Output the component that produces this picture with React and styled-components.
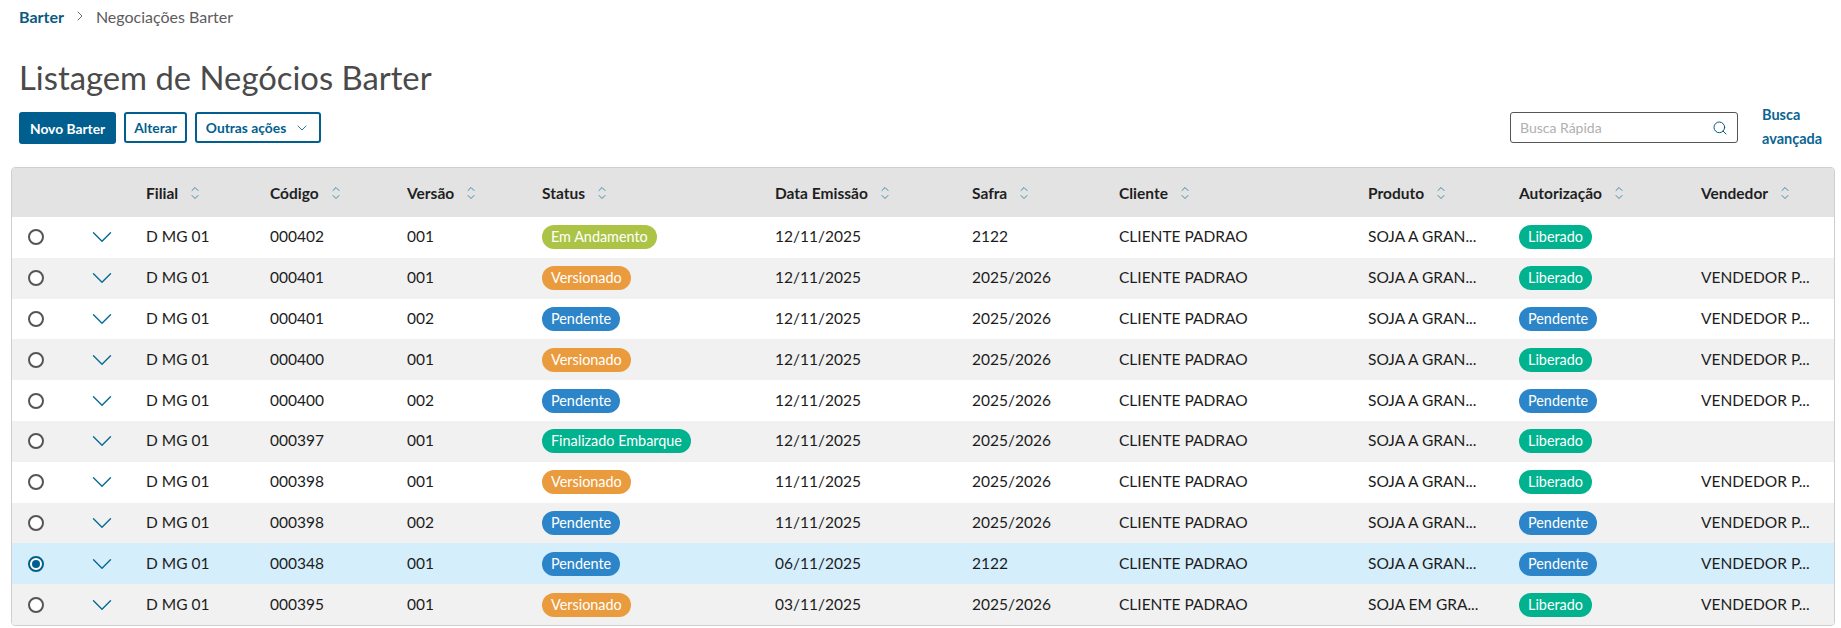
import React from 'react';
import styled, { createGlobalStyle } from 'styled-components';
import { ChevronDown, ChevronRight, ChevronUp, Search } from 'lucide-react';

const GlobalStyle = createGlobalStyle`
  html, body {
    margin: 0;
    padding: 0;
    background: #fff;
    font-family: "Lato", "Open Sans", sans-serif;
    color: #1c1c1c;
    overflow: hidden;
  }
`;

const COLUMNS = '68px 66px 124px 137px 135px 233px 197px 147px 249px 151px 182px 1fr';
const BLUE = '#0c6c94';

const Page = styled.div`
  width: 1841px;
  height: 628px;
  display: flex;
  flex-direction: column;
`;

const Breadcrumb = styled.nav`
  display: flex;
  align-items: center;
  gap: 8px;
  height: 32px;
  padding-left: 19px;
  font-size: 16px;
  color: #555;
`;

const Crumb = styled.span`
  font-weight: ${(p) => (p.$active ? 700 : 400)};
  color: ${(p) => (p.$active ? '#0b5a80' : '#5c5c5c')};
`;

const Title = styled.h1`
  margin: 27px 0 0 19px;
  height: 38px;
  font-size: 32.8px;
  line-height: 38px;
  font-weight: 400;
  color: #4a4a4a;
`;

const Toolbar = styled.div`
  display: flex;
  align-items: flex-start;
  margin-top: 15px;
  padding-left: 19px;
  height: 55px;
`;

const Actions = styled.div`
  display: flex;
  gap: 8px;
`;

const Button = styled.button`
  height: ${(p) => (p.$primary ? 32 : 31)}px;
  padding: 0 ${(p) => (p.$menu ? 9 : p.$primary ? 9 : 8)}px;
  display: flex;
  align-items: center;
  gap: 8px;
  border: 2px solid #005f8f;
  border-radius: 3px;
  background: ${(p) => (p.$primary ? '#005f8f' : '#fff')};
  color: ${(p) => (p.$primary ? '#fff' : '#005f8f')};
  font-family: inherit;
  font-size: 13.8px;
  font-weight: 700;
`;

const SearchArea = styled.div`
  margin-left: auto;
  display: flex;
  gap: 24px;
  padding-right: 9px;
`;

const SearchBox = styled.div`
  width: 228px;
  height: 31px;
  display: flex;
  align-items: center;
  justify-content: space-between;
  padding: 0 9px;
  box-sizing: border-box;
  border: 1px solid #555;
  border-radius: 3px;
  font-size: 14px;
  color: #b0b0b0;
`;

const AdvancedLink = styled.a`
  width: 70px;
  font-size: 14.5px;
  font-weight: 700;
  line-height: 24px;
  margin-top: -9px;
  color: #0b6593;
`;

const Table = styled.div`
  margin: 0 6px 0 11px;
  border: 1px solid #cfcfcf;
  border-radius: 4px;
  overflow: hidden;
`;

const HeadRow = styled.div`
  display: grid;
  grid-template-columns: ${COLUMNS};
  align-items: center;
  height: 49px;
  background: #e3e3e3;
`;

const HeadCell = styled.div`
  display: flex;
  align-items: center;
  gap: 11px;
  font-size: 15.5px;
  font-weight: 700;
  color: #1f1f1f;
`;

const SortIcon = styled.span`
  display: flex;
  flex-direction: column;
  color: ${BLUE};
  & svg:first-child { margin-bottom: -4px; }
`;

const Row = styled.div`
  display: grid;
  grid-template-columns: ${COLUMNS};
  align-items: center;
  height: 40.8px;
  background: ${(p) => (p.$selected ? '#d5eefc' : p.$odd ? '#f1f1f1' : '#fff')};
`;

const Cell = styled.div`
  padding-bottom: 2px;
  font-size: 15.5px;
  color: #1c1c1c;
  white-space: nowrap;
`;

const PillCell = styled.div`
  white-space: nowrap;
  font-size: 15.5px;
`;

const RadioCell = styled.div`
  padding-left: 16px;
  display: flex;
  align-items: center;
`;

const Radio = styled.span`
  width: 16px;
  height: 16px;
  box-sizing: border-box;
  border-radius: 50%;
  border: 2px solid ${(p) => (p.$checked ? '#005f8f' : '#555')};
  background: #fff;
  display: flex;
  align-items: center;
  justify-content: center;
  &::after {
    content: '';
    display: ${(p) => (p.$checked ? 'block' : 'none')};
    width: 8px;
    height: 8px;
    border-radius: 50%;
    background: #005f8f;
  }
`;

const ExpandCell = styled.div`
  display: flex;
  align-items: center;
  padding-left: 5px;
  color: ${BLUE};
`;

const Pill = styled.span`
  display: inline-block;
  height: 24px;
  line-height: 23px;
  padding: 0 9px;
  border-radius: 12px;
  font-size: 14.4px;
  color: #fff;
  background: ${(p) => p.$color};
`;

const PILL_COLORS = {
  'Em Andamento': '#abc445',
  Versionado: '#ea9b3e',
  Pendente: '#2c85c8',
  'Finalizado Embarque': '#00b28e',
  Liberado: '#00b28e',
};

const HEADERS = ['Filial', 'Código', 'Versão', 'Status', 'Data Emissão', 'Safra', 'Cliente', 'Produto', 'Autorização', 'Vendedor'];

const ROWS = [
  ['000402', '001', 'Em Andamento', '12/11/2025', '2122', 'SOJA A GRAN...', 'Liberado', ''],
  ['000401', '001', 'Versionado', '12/11/2025', '2025/2026', 'SOJA A GRAN...', 'Liberado', 'VENDEDOR P...'],
  ['000401', '002', 'Pendente', '12/11/2025', '2025/2026', 'SOJA A GRAN...', 'Pendente', 'VENDEDOR P...'],
  ['000400', '001', 'Versionado', '12/11/2025', '2025/2026', 'SOJA A GRAN...', 'Liberado', 'VENDEDOR P...'],
  ['000400', '002', 'Pendente', '12/11/2025', '2025/2026', 'SOJA A GRAN...', 'Pendente', 'VENDEDOR P...'],
  ['000397', '001', 'Finalizado Embarque', '12/11/2025', '2025/2026', 'SOJA A GRAN...', 'Liberado', ''],
  ['000398', '001', 'Versionado', '11/11/2025', '2025/2026', 'SOJA A GRAN...', 'Liberado', 'VENDEDOR P...'],
  ['000398', '002', 'Pendente', '11/11/2025', '2025/2026', 'SOJA A GRAN...', 'Pendente', 'VENDEDOR P...'],
  ['000348', '001', 'Pendente', '06/11/2025', '2122', 'SOJA A GRAN...', 'Pendente', 'VENDEDOR P...'],
  ['000395', '001', 'Versionado', '03/11/2025', '2025/2026', 'SOJA EM GRA...', 'Liberado', 'VENDEDOR P...'],
];

const Sort = () => (
  <SortIcon>
    <ChevronUp size={12} strokeWidth={1.5} />
    <ChevronDown size={12} strokeWidth={1.5} />
  </SortIcon>
);

export default function App() {
  return (
    <Page>
      <GlobalStyle />
      <Breadcrumb>
        <Crumb $active>Barter</Crumb>
        <ChevronRight size={16} strokeWidth={1.3} />
        <Crumb>Negociações Barter</Crumb>
      </Breadcrumb>
      <Title>Listagem de Negócios Barter</Title>
      <Toolbar>
        <Actions>
          <Button $primary>Novo Barter</Button>
          <Button>Alterar</Button>
          <Button $menu>
            Outras ações
            <ChevronDown size={16} strokeWidth={1.3} />
          </Button>
        </Actions>
        <SearchArea>
          <SearchBox>
            Busca Rápida
            <Search size={16} strokeWidth={1.5} color="#0b5a80" />
          </SearchBox>
          <AdvancedLink>Busca avançada</AdvancedLink>
        </SearchArea>
      </Toolbar>
      <Table>
        <HeadRow>
          <div />
          <div />
          {HEADERS.map((h) => (
            <HeadCell key={h}>
              {h}
              <Sort />
            </HeadCell>
          ))}
        </HeadRow>
        {ROWS.map((r, i) => (
          <Row key={i} $odd={i % 2 === 1} $selected={r[0] === '000348'}>
            <RadioCell>
              <Radio $checked={r[0] === '000348'} />
            </RadioCell>
            <ExpandCell>
              <ChevronDown size={34} strokeWidth={1} />
            </ExpandCell>
            <Cell>D MG 01</Cell>
            <Cell>{r[0]}</Cell>
            <Cell>{r[1]}</Cell>
            <PillCell>
              <Pill $color={PILL_COLORS[r[2]]}>{r[2]}</Pill>
            </PillCell>
            <Cell>{r[3]}</Cell>
            <Cell>{r[4]}</Cell>
            <Cell>CLIENTE PADRAO</Cell>
            <Cell>{r[5]}</Cell>
            <PillCell>
              <Pill $color={PILL_COLORS[r[6]]}>{r[6]}</Pill>
            </PillCell>
            <Cell>{r[7]}</Cell>
          </Row>
        ))}
      </Table>
    </Page>
  );
}
